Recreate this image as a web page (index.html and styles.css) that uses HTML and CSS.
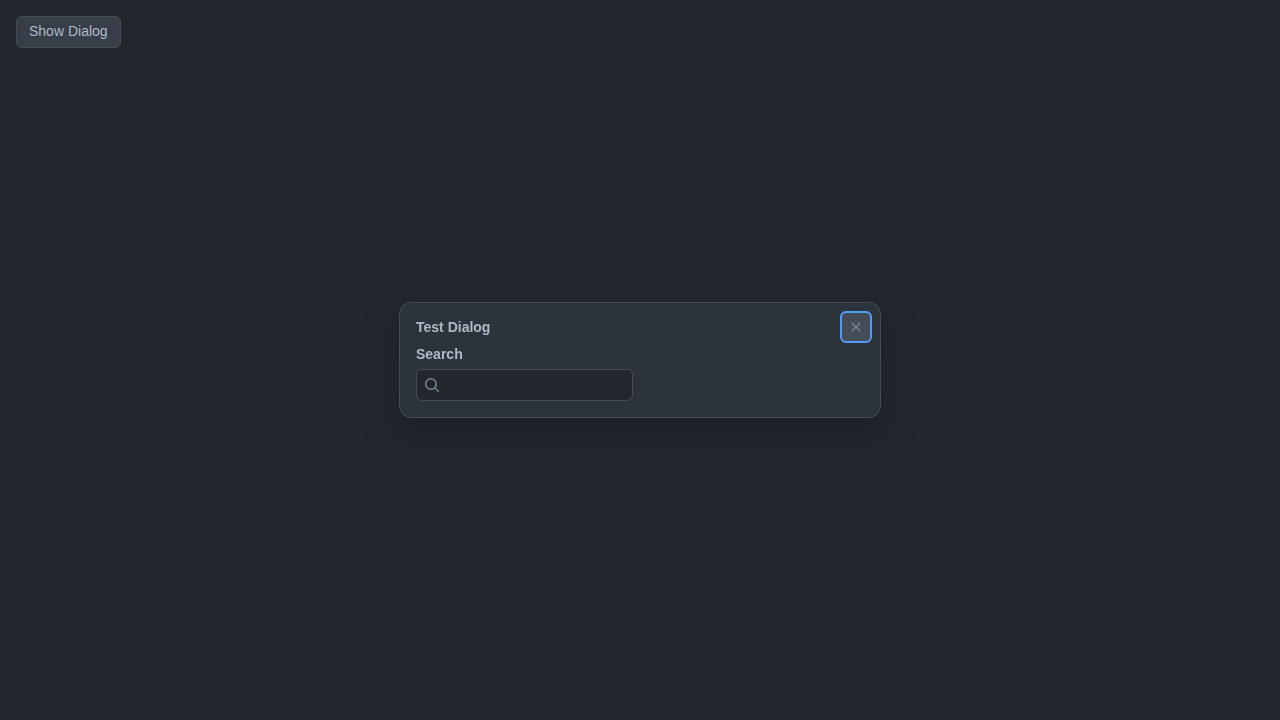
FILE: index.html
```html
<!DOCTYPE html>
<html lang="en">
<head>
<meta charset="utf-8">
<title>Test Dialog</title>
<link rel="stylesheet" href="styles.css">
</head>
<body>
<button class="button" type="button">Show Dialog</button>
<div class="overlay">
  <section class="dialog" role="dialog" aria-labelledby="dialog-title">
    <header class="dialog-header">
      <h1 class="dialog-title" id="dialog-title">Test Dialog</h1>
      <button class="close-button" type="button" aria-label="Close">
        <svg width="16" height="16" viewBox="0 0 16 16" fill="currentColor"><path d="M3.72 3.72a.75.75 0 0 1 1.06 0L8 6.94l3.22-3.22a.75.75 0 1 1 1.06 1.06L9.06 8l3.22 3.22a.75.75 0 1 1-1.06 1.06L8 9.06l-3.22 3.22a.75.75 0 0 1-1.06-1.06L6.94 8 3.72 4.78a.75.75 0 0 1 0-1.06Z"/></svg>
      </button>
    </header>
    <div class="dialog-body">
      <label class="label" for="search">Search</label>
      <div class="field">
        <svg width="16" height="16" viewBox="0 0 16 16" fill="currentColor"><path fill-rule="evenodd" d="M11.5 7a4.499 4.499 0 1 1-8.998 0A4.499 4.499 0 0 1 11.5 7Zm-.82 4.74a6 6 0 1 1 1.06-1.06l3.04 3.04a.75.75 0 1 1-1.06 1.06l-3.04-3.04Z"/></svg>
        <input class="input" id="search" type="text">
      </div>
    </div>
  </section>
</div>
</body>
</html>
```
FILE: styles.css
```css
* { box-sizing: border-box; }
body {
  margin: 0;
  padding: 16px;
  background: #22272e;
  color: #adbac7;
  font: 14px/20px "Liberation Sans", Arial, sans-serif;
}
.button {
  display: block;
  height: 32px;
  padding: 0 12px 2px;
  border: 1px solid #444c56;
  border-radius: 6px;
  background: #373e47;
  color: #adbac7;
  font: inherit;
}
.overlay {
  position: fixed;
  inset: 0;
  display: flex;
  align-items: center;
  justify-content: center;
}
.dialog {
  width: 482px;
  border: 1px solid #444c56;
  border-radius: 12px;
  background: #2d333b;
  box-shadow: 0 16px 32px rgba(28, 33, 40, 0.85);
}
.dialog-header {
  display: flex;
  align-items: center;
  justify-content: space-between;
  padding: 8px 8px 0 16px;
}
.dialog-title {
  margin: 0;
  font-size: 14px;
  line-height: 20px;
}
.close-button {
  display: flex;
  align-items: center;
  justify-content: center;
  width: 32px;
  height: 32px;
  padding: 0;
  border: 2px solid #539bf5;
  border-radius: 6px;
  background: #444c56;
  color: #768390;
}
.dialog-body { padding: 1px 16px 16px; }
.label {
  display: block;
  margin-bottom: 5px;
  font-weight: 600;
}
.field {
  display: flex;
  align-items: center;
  width: 217px;
  height: 32px;
  padding-left: 7px;
  border: 1px solid #444c56;
  border-radius: 6px;
  background: #22272e;
  color: #768390;
}
.input {
  flex: 1;
  min-width: 0;
  border: 0;
  outline: 0;
  background: transparent;
  color: #adbac7;
  font: inherit;
}
```
